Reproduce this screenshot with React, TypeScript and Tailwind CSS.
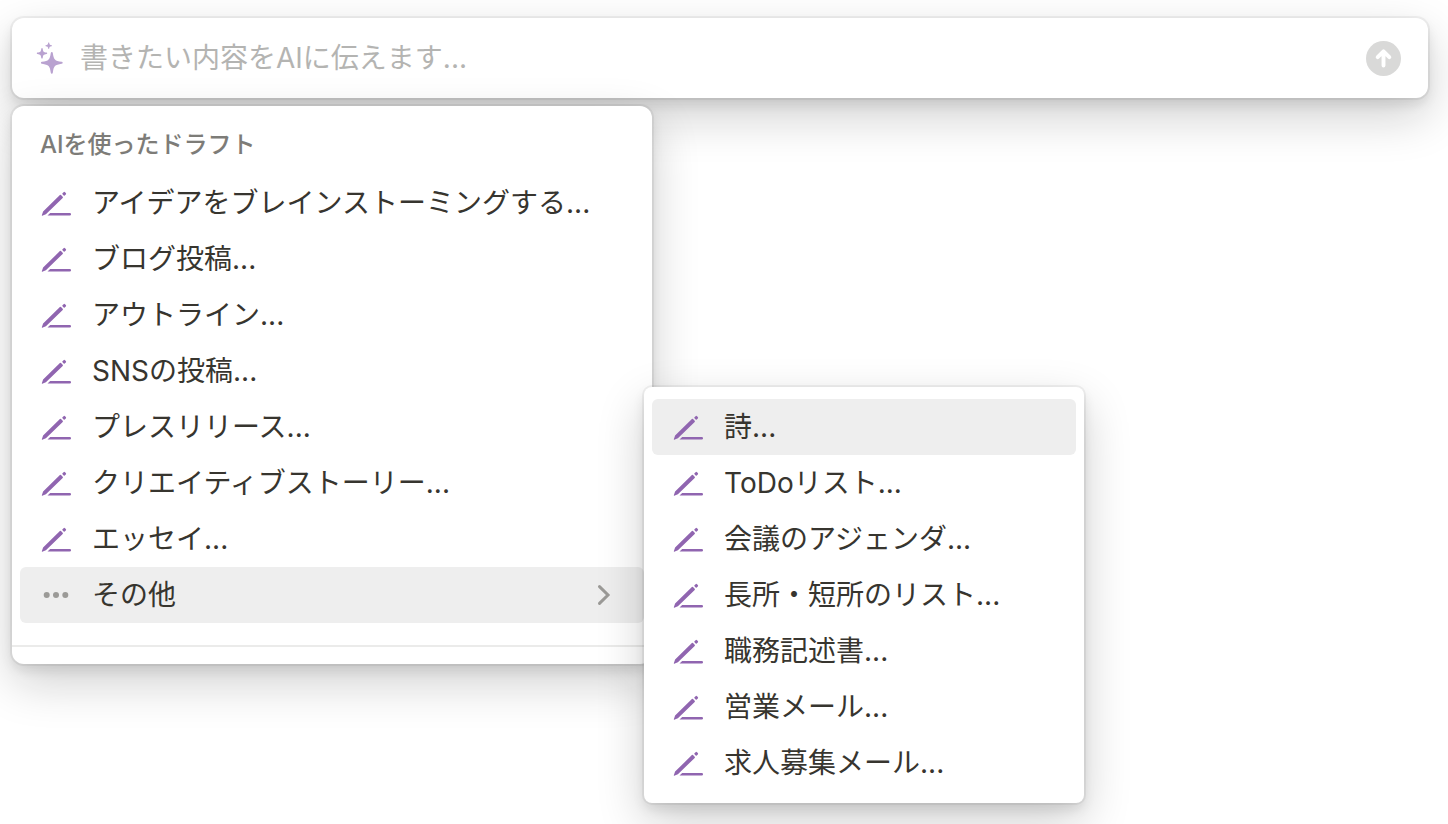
import React from "react";

const shadow =
  "shadow-[0_0_0_2px_rgba(15,15,15,0.05),0_6px_12px_rgba(15,15,15,0.1),0_18px_48px_rgba(15,15,15,0.2)]";

const drafts = [
  "アイデアをブレインストーミングする...",
  "ブログ投稿...",
  "アウトライン...",
  "SNSの投稿...",
  "プレスリリース...",
  "クリエイティブストーリー...",
  "エッセイ...",
];

const more = [
  "詩...",
  "ToDoリスト...",
  "会議のアジェンダ...",
  "長所・短所のリスト...",
  "職務記述書...",
  "営業メール...",
  "求人募集メール...",
];

function PencilIcon() {
  return (
    <svg viewBox="0 0 32 32" className="size-8 shrink-0 fill-[#9065b0]" aria-hidden="true">
      <path d="M2 27.700 3.100 24.600 19.900 8.100a.8.8 0 0 1 1.100 0l1.700 1.700a.8.8 0 0 1 0 1.100L5.900 27.300 2.800 28.600a.6.6 0 0 1-.8-.9Z" />
      <path d="m22.500 6.300 1.100-1.100a1 1 0 0 1 1.400 0l.8.8a1 1 0 0 1 0 1.400l-1.100 1.100a.7.7 0 0 1-1 0l-1.200-1.200a.7.7 0 0 1 0-1Z" />
      <path d="M10.200 25.900h19.500a1.350 1.350 0 0 1 0 2.700H7.500Z" />
    </svg>
  );
}

function SparklesIcon() {
  return (
    <svg viewBox="0 0 32 32" className="size-8 shrink-0 fill-[#b9a2d0]" aria-hidden="true">
      <path d="M17.800 9.900c.6 0 .9.400 1 1 1 6.600 1.900 7.900 8.900 8.900.6.100 1 .4 1 1s-.4.900-1 1c-7 1-7.900 2.300-8.900 8.900-.1.600-.4 1-1 1s-.9-.4-1-1c-1-6.600-1.900-7.900-8.900-8.900-.6-.1-1-.4-1-1s.4-.9 1-1c7-1 7.900-2.300 8.900-8.900.1-.6.4-1 1-1Z" />
      <path d="M8 6.100c.4 0 .6.200.7.600.5 3 .8 3.400 3.900 3.900.4.100.6.300.6.700s-.2.600-.6.700c-3.100.5-3.400.9-3.900 3.900-.1.400-.3.600-.7.600s-.6-.2-.7-.6c-.5-3-.8-3.400-3.900-3.900-.4-.1-.6-.3-.6-.7s.2-.6.600-.7c3.100-.5 3.400-.9 3.900-3.900.1-.4.300-.6.700-.6Z" />
      <path d="M14.700.4c.3 0 .4.200.5.400.3 1.900.5 2.100 2.400 2.400.3.100.4.200.4.500s-.1.400-.4.500c-1.900.3-2.100.5-2.400 2.400-.1.300-.2.400-.5.400s-.4-.1-.5-.4c-.3-1.900-.5-2.100-2.400-2.400-.3-.1-.4-.2-.4-.5s.1-.4.400-.5c1.900-.3 2.100-.5 2.400-2.400.1-.2.200-.4.500-.4Z" />
    </svg>
  );
}

function MenuItem({ label, active = false }: { label: string; active?: boolean }) {
  return (
    <li>
      <button
        type="button"
        className={`flex h-14 w-full items-center gap-5 rounded-md px-5 text-left text-[28px] leading-9 ${
          active ? "bg-[#eeeeee]" : ""
        }`}
      >
        <PencilIcon />
        <span className="whitespace-nowrap">{label}</span>
      </button>
    </li>
  );
}

export default function App() {
  return (
    <main className="min-h-screen overflow-hidden bg-white pt-[18px] pr-5 pb-5 pl-3 font-[Inter,'Noto_Sans_CJK_JP',sans-serif] text-[#37352f]">
      <form
        className={`flex h-20 items-center gap-3.5 rounded-xl bg-white pr-[27px] pl-[22px] ${shadow}`}
        onSubmit={(e) => e.preventDefault()}
      >
        <SparklesIcon />
        <input
          type="text"
          aria-label="AIへの指示"
          placeholder="書きたい内容をAIに伝えます..."
          className="h-12 min-w-0 flex-1 bg-transparent text-[28px] outline-none placeholder:text-[#b4b4b2]"
        />
        <button type="submit" aria-label="送信" className="shrink-0">
          <svg viewBox="0 0 36 36" className="block size-[35px]" aria-hidden="true">
            <circle cx="18" cy="18" r="18" fill="#d9d9d8" />
            <path
              d="M18 25.200V11.500M12 16.700l6-6 6 6"
              fill="none"
              stroke="#fff"
              strokeWidth="4"
              strokeLinecap="round"
              strokeLinejoin="round"
            />
          </svg>
        </button>
      </form>

      <nav className={`relative mt-2 w-[640px] rounded-xl bg-white pb-[17px] ${shadow}`}>
        <h2 className="px-7 pt-[21px] pb-3 text-2xl leading-9 font-medium text-[#7d7c78]">
          AIを使ったドラフト
        </h2>
        <ul className="px-2">
          {drafts.map((label) => (
            <MenuItem key={label} label={label} />
          ))}
          <li className="relative">
            <button
              type="button"
              aria-expanded="true"
              className="flex h-14 w-full items-center gap-5 rounded-md bg-[#eeeeee] pr-8 pl-5 text-left text-[28px] leading-9"
            >
              <svg viewBox="0 0 32 32" className="size-8 shrink-0 fill-[#9b9a97]" aria-hidden="true">
                <circle cx="6.700" cy="16" r="3" />
                <circle cx="16" cy="16" r="3" />
                <circle cx="25.300" cy="16" r="3" />
              </svg>
              <span className="flex-1">その他</span>
              <svg
                viewBox="0 0 16 24"
                className="h-6 w-4 shrink-0 fill-none stroke-[#9b9a97]"
                strokeWidth="3"
                strokeLinecap="round"
                strokeLinejoin="miter"
                aria-hidden="true"
              >
                <path d="M3.500 3.600 12 12 3.500 20.400" />
              </svg>
            </button>
            <ul
              className={`absolute top-1/2 left-full w-[440px] -translate-y-1/2 rounded-lg bg-white px-2 py-3 ${shadow}`}
            >
              {more.map((label, i) => (
                <MenuItem key={label} label={label} active={i === 0} />
              ))}
            </ul>
          </li>
        </ul>
        <hr className="mt-[22px] border-t-2 border-[#ebebea]" />
      </nav>
    </main>
  );
}
